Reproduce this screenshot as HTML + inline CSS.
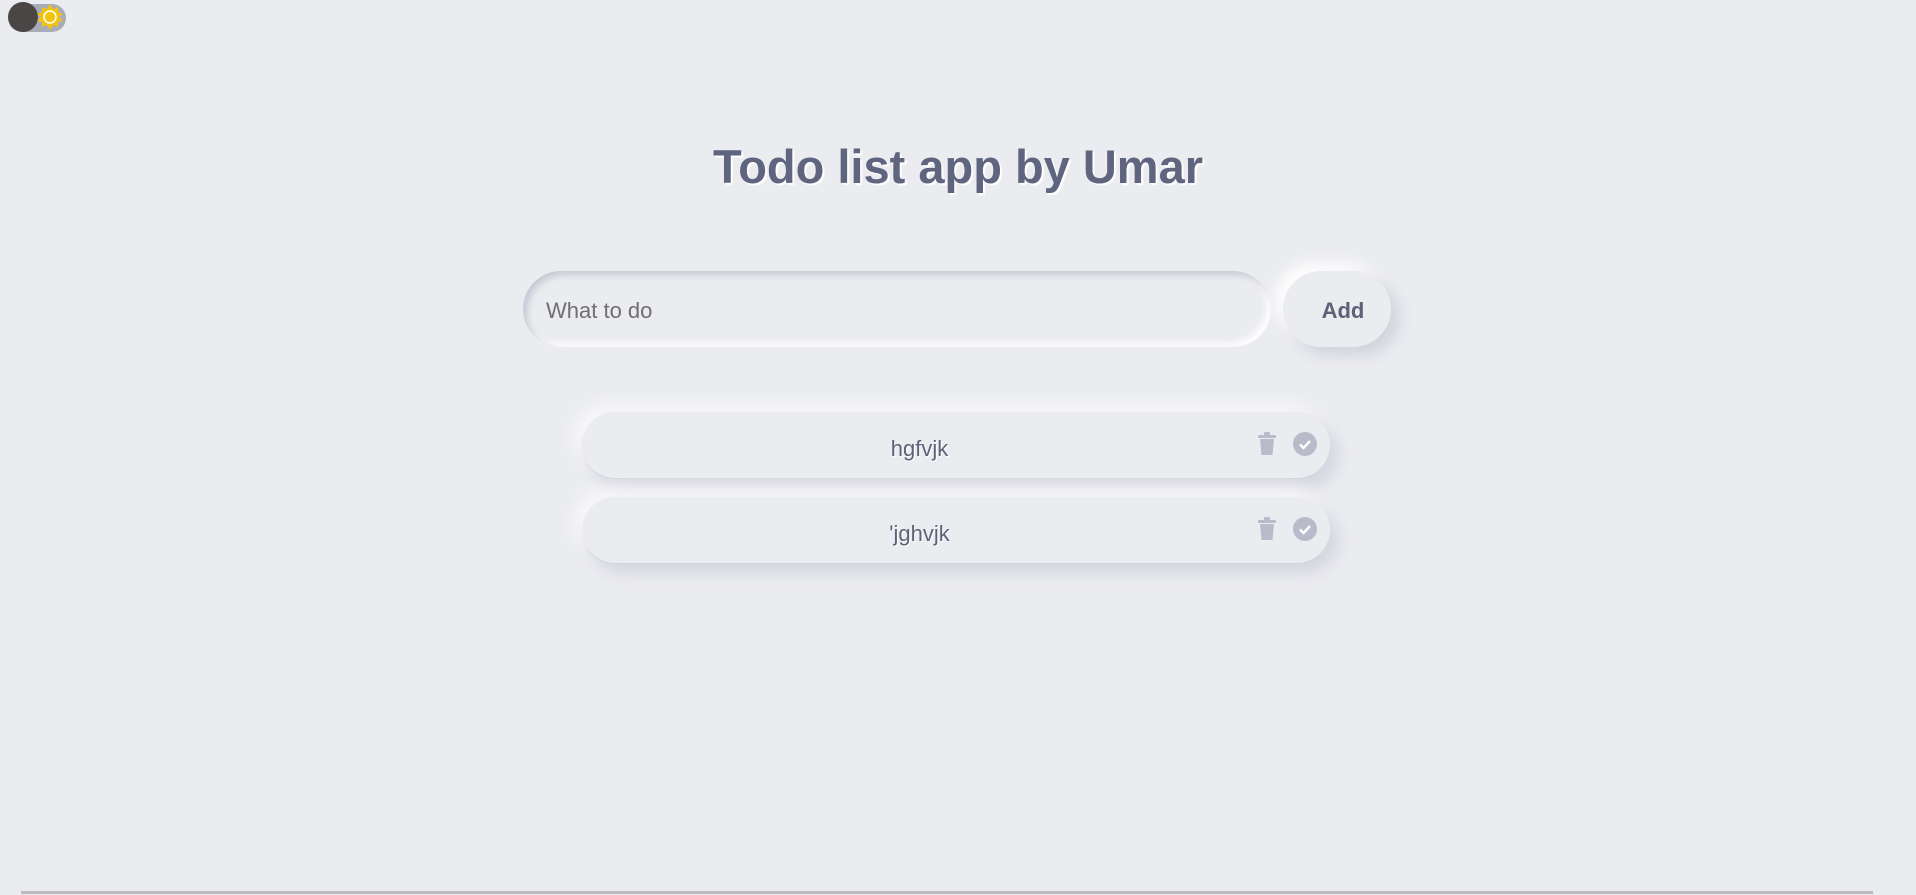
<!DOCTYPE html>
<html><head><meta charset="utf-8"><style>
html,body{margin:0;padding:0;width:1916px;height:895px;background:#ebecf0;overflow:hidden;font-family:"Liberation Sans",sans-serif;position:relative}
.abs{position:absolute}
h1{position:absolute;left:0;width:1916px;top:139px;margin:0;text-align:center;font-size:47px;font-weight:bold;color:#60657f;text-shadow:2px 2px 1px #fff}
.input{left:523px;top:271px;width:748px;height:76px;border-radius:38px;background:#ebecf0;box-shadow:inset 4px 4px 7px #c8c9d4,inset -4px -4px 7px #fff;box-sizing:border-box}
.input span{position:absolute;left:23px;top:27px;font-size:22px;color:#6f6e70}
.add{left:1283px;top:271px;width:108px;height:76px;border-radius:38px;background:#ebecf0;box-shadow:8px 8px 15px #d1d2db,-8px -8px 15px #fff;text-align:center;line-height:80px;font-size:22px;font-weight:bold;color:#5d6279;text-indent:12px}
.item{left:582px;width:748px;height:66px;border-radius:33px;background:#ebecf0;box-shadow:8px 10px 16px #d4d5de,-8px -8px 16px #f8f8fb,0 1px 0 #c5c6d1}
.item .t{position:absolute;left:280px;width:115px;text-align:center;top:24px;font-size:22px;color:#5d6279;text-shadow:1px 1px 0 #fff}
.line{left:21px;top:891px;width:1852px;height:3px;background:#bcbcbc}
</style></head><body>
<div class="abs" style="left:8px;top:4px;width:58px;height:28px;border-radius:14px;background:#a9abb7"></div>
<div class="abs" style="left:8px;top:2px;width:30px;height:30px;border-radius:50%;background:#4a4646"></div>
<svg class="abs" style="left:37px;top:4px" width="26" height="26" viewBox="0 0 26 26">
<polygon points="13,0 16,5 21,3 21,8 26,10 22,13 26,17 21,18 21,23 16,21 13,26 10,21 5,23 5,18 0,17 4,13 0,10 5,8 5,3 10,5" fill="#f1c40f"/>
<circle cx="13" cy="13" r="6" fill="#f1c40f" stroke="#fff" stroke-width="1.5"/>
</svg>
<h1>Todo list app by Umar</h1>
<div class="abs input"><span>What to do</span></div>
<div class="abs add">Add</div>
<div class="abs item" style="top:412px"><div class="t">hgfvjk</div>
<svg class="abs" style="left:674px;top:20px" width="22" height="24" viewBox="0 0 22 24"><rect x="2" y="3" width="18" height="3" rx="1" fill="#b9bbcb"/><rect x="8" y="0" width="6" height="4" rx="1" fill="#b9bbcb"/><path d="M4 7h14l-1.5 16h-11z" fill="#b9bbcb"/></svg>
<svg class="abs" style="left:710px;top:19px" width="26" height="26" viewBox="0 0 26 26"><circle cx="13" cy="13" r="12" fill="#b9bbcb"/><path d="M8 13.5l3.5 3.5 6.5-7" stroke="#fff" stroke-width="2.4" fill="none"/></svg>
</div>
<div class="abs item" style="top:497px"><div class="t">'jghvjk</div>
<svg class="abs" style="left:674px;top:20px" width="22" height="24" viewBox="0 0 22 24"><rect x="2" y="3" width="18" height="3" rx="1" fill="#b9bbcb"/><rect x="8" y="0" width="6" height="4" rx="1" fill="#b9bbcb"/><path d="M4 7h14l-1.5 16h-11z" fill="#b9bbcb"/></svg>
<svg class="abs" style="left:710px;top:19px" width="26" height="26" viewBox="0 0 26 26"><circle cx="13" cy="13" r="12" fill="#b9bbcb"/><path d="M8 13.5l3.5 3.5 6.5-7" stroke="#fff" stroke-width="2.4" fill="none"/></svg>
</div>
<div class="abs line"></div>
</body></html>
